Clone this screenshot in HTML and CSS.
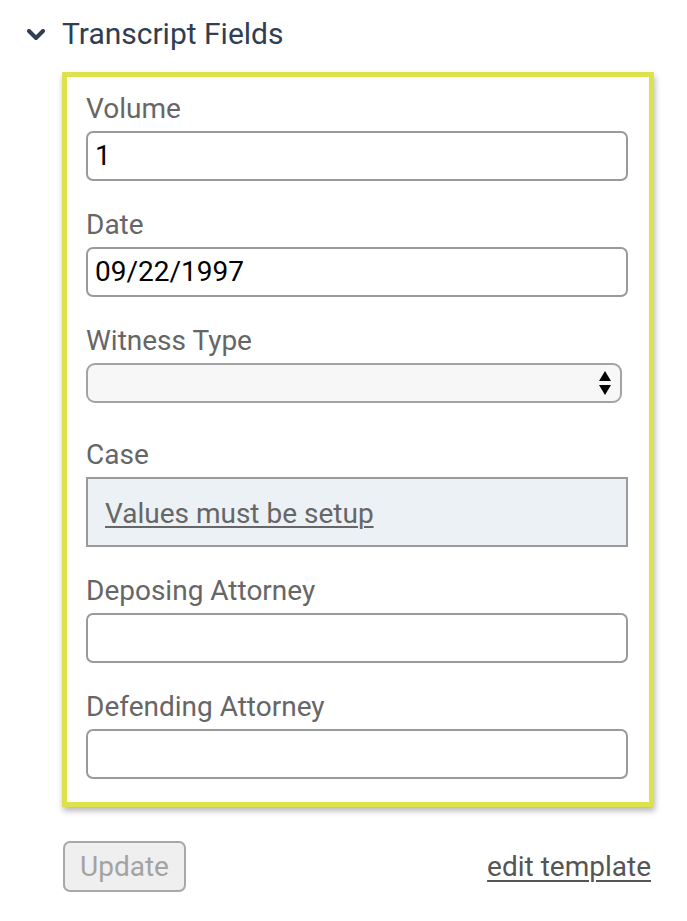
FILE: index.html
```html
<!DOCTYPE html>
<html>
<head>
<meta charset="utf-8">
<link rel="stylesheet" href="styles.css">
</head>
<body>
<div class="page">
  <div class="section-head">
    <svg class="chevron" width="18" height="12" viewBox="0 0 18 12"><path d="M2 2 L9 9 L16 2" fill="none" stroke="#2f3e52" stroke-width="4" stroke-linecap="round" stroke-linejoin="round"/></svg>
    <span class="section-title">Transcript Fields</span>
  </div>
  <div class="fields-box">
    <div class="field">
      <label class="field-label">Volume</label>
      <div class="text-input">1</div>
    </div>
    <div class="field">
      <label class="field-label">Date</label>
      <div class="text-input">09/22/1997</div>
    </div>
    <div class="field field-select">
      <label class="field-label">Witness Type</label>
      <div class="select-input">
        <svg class="select-arrows" width="14" height="26" viewBox="0 0 14 26"><path d="M7 1 L13 11 L1 11 Z" fill="#000"/><path d="M1 15 L13 15 L7 25 Z" fill="#000"/></svg>
      </div>
    </div>
    <div class="field">
      <label class="field-label">Case</label>
      <div class="case-box"><a class="case-link">Values must be setup</a></div>
    </div>
    <div class="field">
      <label class="field-label">Deposing Attorney</label>
      <div class="text-input"></div>
    </div>
    <div class="field">
      <label class="field-label">Defending Attorney</label>
      <div class="text-input"></div>
    </div>
  </div>
  <div class="actions">
    <button class="update-btn">Update</button>
    <a class="edit-link">edit template</a>
  </div>
</div>
</body>
</html>
```

FILE: styles.css
```css
html, body {
  margin: 0;
  padding: 0;
  background: #ffffff;
}
body {
  font-family: Roboto, "Liberation Sans", Arial, sans-serif;
}
.page {
  width: 687px;
  padding-top: 14px;
  box-sizing: border-box;
}
.section-head {
  display: flex;
  align-items: center;
  height: 40px;
  padding-left: 27px;
}
.chevron {
  display: block;
  margin-right: 17px;
  margin-top: 2px;
}
.section-title {
  font-size: 30px;
  color: #2f3e52;
  line-height: 40px;
}
.fields-box {
  margin-top: 18px;
  margin-left: 62px;
  width: 592px;
  box-sizing: border-box;
  border: 5px solid #dde24c;
  padding: 14px 21px 23px 18px;
  box-shadow: 1px 4px 6px rgba(0,0,0,0.28);
  display: flex;
  flex-direction: column;
  gap: 26px;
}
.field {
  display: flex;
  flex-direction: column;
}
.field-select {
  margin-bottom: 8px;
}
.field-label {
  font-size: 28px;
  line-height: 36px;
  color: #666666;
  margin-bottom: 4px;
  padding-left: 1px;
}
.text-input {
  margin-left: 1px;
  height: 50px;
  box-sizing: border-box;
  border: 2px solid #9a9a9a;
  border-radius: 7px;
  padding: 0 7px;
  font-size: 28px;
  line-height: 46px;
  color: #000;
}
.select-input {
  margin-left: 1px;
  height: 40px;
  width: 536px;
  box-sizing: border-box;
  border: 2px solid #a3a3a3;
  border-radius: 9px;
  background: #f7f7f7;
  display: flex;
  align-items: center;
  justify-content: flex-end;
  padding-right: 8px;
}
.select-arrows {
  display: block;
}
.case-box {
  margin-left: 1px;
  height: 70px;
  box-sizing: border-box;
  border: 2px solid #9a9a9a;
  background: #ecf1f5;
  display: flex;
  align-items: center;
  padding-left: 17px;
  padding-top: 2px;
}
.case-link {
  font-size: 28px;
  color: #666666;
  text-decoration: underline;
  text-underline-offset: 3px;
  text-decoration-thickness: 2px;
}
.actions {
  display: flex;
  justify-content: space-between;
  align-items: center;
  margin-top: 34px;
  margin-left: 63px;
  width: 588px;
}
.update-btn {
  width: 123px;
  height: 51px;
  box-sizing: border-box;
  border: 2px solid #a8a8a8;
  border-radius: 7px;
  background: #efefef;
  color: #a3a3a3;
  font-family: Roboto, "Liberation Sans", Arial, sans-serif;
  font-size: 28px;
  padding: 0;
}
.edit-link {
  font-size: 28px;
  color: #555555;
  text-decoration: underline;
  text-underline-offset: 4px;
  text-decoration-thickness: 2px;
}
```
